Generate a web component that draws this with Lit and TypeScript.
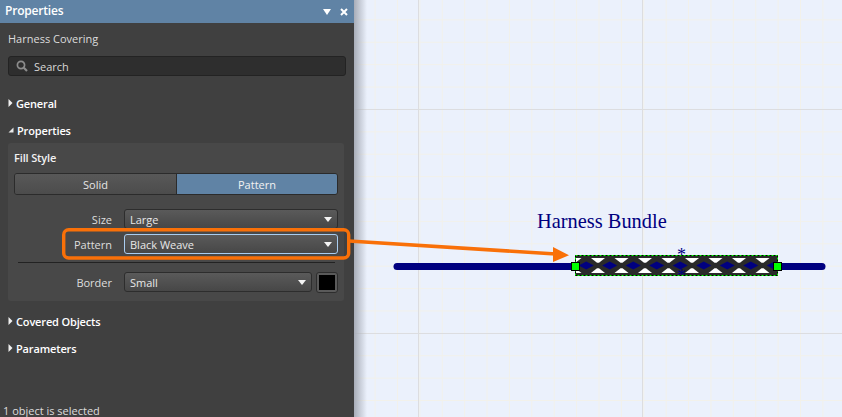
import { LitElement, html, css, svg } from "lit";
import { customElement } from "lit/decorators.js";

const arrowDown = html`<svg class="dd" width="8" height="5" viewBox="0 0 8 5"><path d="M0 0H8L4 5Z" fill="#f4f4f4"/></svg>`;
const triR = html`<svg class="tri" width="5" height="8" viewBox="0 0 5 8"><path d="M0.5 0L4.5 4L0.5 8Z" fill="#f0f0f0"/></svg>`;
const triD = html`<svg class="tri" width="6" height="6" viewBox="0 0 6 6"><path d="M5.5 0.5V5.5H0.5Z" fill="#e8e8e8"/></svg>`;

function weave() {
  const out = [];
  const p = 23.5;
  for (let k = -1; k < 10; k++) {
    const c = 22.5 + k * p;
    const m = c + p / 2;
    out.push(svg`<path d="M${c - 7} 2.5H${c + 7}L${c + 1} 7.2H${c - 1}Z" fill="#fff"/>`);
    out.push(svg`<path d="M${c - 7} 17.5H${c + 7}L${c + 1} 12.8H${c - 1}Z" fill="#fff"/>`);
    out.push(svg`<path d="M${m - 7.5} 10L${m} 6L${m + 7.5} 10L${m} 14Z" fill="#000080"/>`);
  }
  return out;
}

@customElement("app-root")
export class AppRoot extends LitElement {
  static styles = css`
    :host { display: block; width: 842px; height: 417px; overflow: hidden; position: relative;
      font-family: "Open Sans", "Noto Sans", sans-serif; font-size: 11px; color: #e6e6e6; }
    .page { display: flex; width: 842px; height: 417px; }
    .panel { width: 354px; flex: none; background: #404040; display: flex; flex-direction: column; height: 417px; }
    .title { height: 23px; background: #6083a5; display: flex; align-items: center; padding: 0 6px 0 5px; flex: none; }
    .title b { flex: 1; font-size: 12px; font-weight: 600; color: #fff; letter-spacing: -0.2px; margin-top: -2px; }
    .title svg { margin-left: 9px; display: block; }
    .sub { padding: 8px 8px 0; height: 16px; line-height: 16px; color: #dcdcdc; }
    .search { margin: 9px 8px 0 8px; height: 20px; box-sizing: border-box; background: #2e2e2e; border: 1px solid #232323; border-radius: 3px;
      display: flex; align-items: center; padding-left: 7px; gap: 6px; color: #d8d8d8; width: 338px; }
    .sec { display: flex; align-items: center; height: 16px; padding-left: 8px; gap: 3px; font-weight: 600; color: #fff; letter-spacing: -0.15px; }
    .g1 { margin-top: 19px; }
    .g2 { margin-top: 11px; }
    .box { margin: 5px 10px 0 8px; background: #484848; border-radius: 3px; height: 158px; padding: 7px 6px 0 6px; box-sizing: border-box; }
    .box h4 { margin: 0; font-size: 11px; line-height: 16px; font-weight: 600; color: #f2f2f2; letter-spacing: -0.15px; }
    .seg { display: flex; height: 22px; margin-top: 7px; box-sizing: border-box; border: 1px solid #2b2b2b; border-radius: 3px; width: 324px; overflow: hidden; }
    .seg div { display: flex; align-items: center; justify-content: center; box-sizing: border-box; }
    .seg .a { width: 162px; background: linear-gradient(#585858, #4c4c4c); border-right: 1px solid #2b2b2b; color: #e6e6e6; }
    .seg .b { flex: 1; background: #6083a5; color: #f2f2f2; }
    .row { display: flex; align-items: center; height: 20px; }
    .row label { width: 110px; padding-right: 12px; box-sizing: border-box; text-align: right; color: #dedede; }
    .sel { width: 214px; height: 20px; box-sizing: border-box; border: 1px solid #2d2d2d; border-radius: 3px;
      background: linear-gradient(#5a5a5a, #474747); display: flex; align-items: center; padding: 0 5px; color: #e8e8e8; justify-content: space-between; }
    .sel.focus { border-color: #a9cdf0; }
    .sel.short { width: 188px; }
    .r1 { margin-top: 14px; }
    .r2 { margin-top: 5px; }
    .rule { height: 1px; background: #222; margin: 8px 3px 0 4px; }
    .r3 { margin-top: 9px; }
    .swatch { margin-left: 4px; width: 22px; height: 21px; flex: none; box-sizing: border-box; border: 1px solid #2d2d2d; border-radius: 3px; background: #5a5a5a; padding: 2px; }
    .swatch i { display: block; width: 16px; height: 15px; background: #000; }
    .s1 { margin-top: 12px; }
    .s2 { margin-top: 11px; }
    .foot { margin-top: auto; padding: 0 0 0 3px; height: 13px; line-height: 13px; color: #dcdcdc; }
    .canvas { flex: 1; position: relative; background-color: #ebf1fc;
      background-image:
        linear-gradient(90deg, #dcdde0 1px, transparent 1px),
        linear-gradient(#dcdde0 1px, transparent 1px),
        linear-gradient(90deg, #f2f1ea 1px, transparent 1px),
        linear-gradient(#f2f1ea 1px, transparent 1px);
      background-size: 224px 224px, 224px 224px, 22.4px 22.4px, 22.4px 22.4px;
      background-position: 64px 109px, 0 109px, 20.6px 0, 0 19.4px; }
    .shadow { position: absolute; left: 0; top: 0; bottom: 0; width: 13px; background: linear-gradient(90deg, #a8adb8, rgba(235,241,252,0)); }
    .harness { position: absolute; left: 183px; top: 209px; font-family: "Liberation Serif", serif; font-size: 20.4px; line-height: 24px; color: #000080; white-space: nowrap; }
    .draw { position: absolute; left: 0; top: 0; }
    .overlay { position: absolute; left: 0; top: 0; pointer-events: none; }
  `;

  render() {
    return html`<div class="page">
      <div class="panel">
        <div class="title"><b>Properties</b>
          <svg width="8" height="6" viewBox="0 0 8 6"><path d="M0 0H8L4 6Z" fill="#fff"/></svg>
          <svg width="8" height="8" viewBox="0 0 8 8"><path d="M1 1L7 7M7 1L1 7" stroke="#fff" stroke-width="2"/></svg>
        </div>
        <div class="sub">Harness Covering</div>
        <div class="search">
          <svg width="12" height="12" viewBox="0 0 12 12"><circle cx="5" cy="5" r="3.6" fill="none" stroke="#8c8c8c" stroke-width="1.7"/><path d="M7.8 7.8L11 11" stroke="#8c8c8c" stroke-width="2.2"/></svg>
          <span>Search</span>
        </div>
        <div class="sec g1">${triR}<span>General</span></div>
        <div class="sec g2">${triD}<span>Properties</span></div>
        <div class="box">
          <h4>Fill Style</h4>
          <div class="seg"><div class="a">Solid</div><div class="b">Pattern</div></div>
          <div class="row r1"><label>Size</label><div class="sel"><span>Large</span>${arrowDown}</div></div>
          <div class="row r2"><label>Pattern</label><div class="sel focus"><span>Black Weave</span>${arrowDown}</div></div>
          <div class="rule"></div>
          <div class="row r3"><label>Border</label><div class="sel short"><span>Small</span>${arrowDown}</div><div class="swatch"><i></i></div></div>
        </div>
        <div class="sec s1">${triR}<span>Covered Objects</span></div>
        <div class="sec s2">${triR}<span>Parameters</span></div>
        <div class="foot">1 object is selected</div>
      </div>
      <div class="canvas">
        <div class="shadow"></div>
        <div class="harness">Harness Bundle</div>
        <svg class="draw" width="488" height="417" viewBox="354 0 488 417">
          <path d="M397 266.5H822" stroke="#000080" stroke-width="7" stroke-linecap="round"/>
          <text x="677" y="261" font-family="Liberation Serif" font-size="18" fill="#000080">*</text>
          <svg x="576" y="256" width="201" height="19" viewBox="0.5 0.5 201 19">
            <rect width="202" height="20" fill="#2a2a2a"/>
            ${weave()}
          </svg>
          <text x="677" y="282" font-family="Liberation Serif" font-size="18" fill="#000080">*</text>
          <rect x="575.5" y="255.5" width="202" height="20" fill="none" stroke="#000" stroke-width="1"/>
          <rect x="575.5" y="255.5" width="202" height="20" fill="none" stroke="#00ff00" stroke-width="1" stroke-dasharray="2 2"/>
          <rect x="571.5" y="262.5" width="8" height="8" fill="#00ff00" stroke="#000" />
          <rect x="773.5" y="262.5" width="8" height="8" fill="#00ff00" stroke="#000" />
        </svg>
      </div>
    </div>
    <svg class="overlay" width="842" height="417">
      <rect x="63.7" y="229.7" width="285" height="28.3" rx="5" fill="none" stroke="#f97008" stroke-width="3.4"/>
      <path d="M349 241L556 254" stroke="#f97008" stroke-width="3.6" fill="none"/>
      <path d="M569 255.3L553 247L553 262Z" fill="#f97008"/>
    </svg>`;
  }
}
